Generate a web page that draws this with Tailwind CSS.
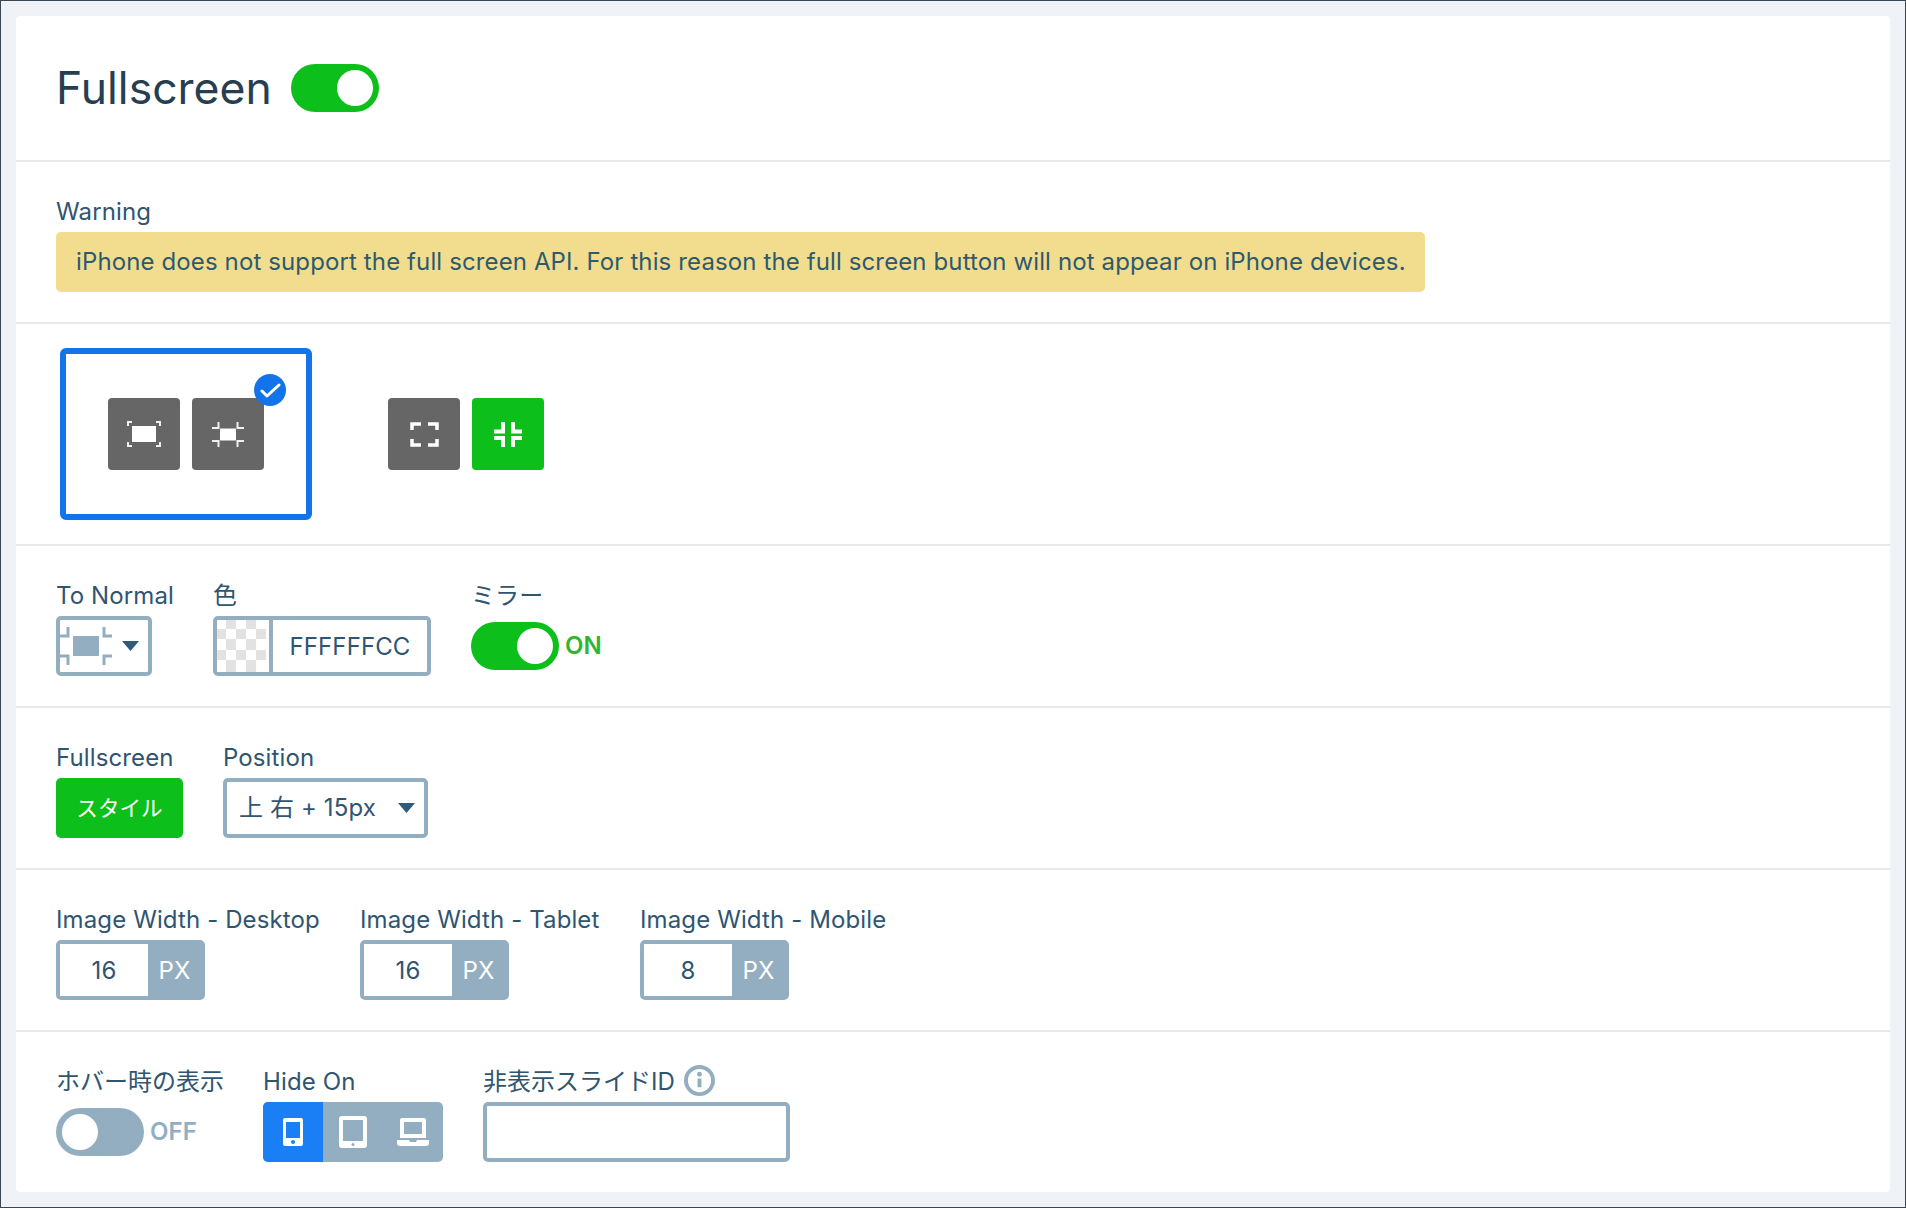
<!DOCTYPE html>
<html lang="ja">
<head>
    <meta charset="UTF-8">
    <meta name="viewport" content="width=device-width, initial-scale=1.0">
    <title>Fullscreen</title>
    <script src="https://cdn.jsdelivr.net/npm/@tailwindcss/browser@4"></script>
</head>
<body class="h-screen overflow-hidden bg-[#eff3f7] border border-[#3b4650] p-[15px] font-['Inter','Noto_Sans_CJK_JP',sans-serif] text-[24px] tracking-[0.12px] text-[#2f5571]">
    <div class="bg-white rounded-[4px] h-[1176px] flex flex-col">

        <!-- heading -->
        <div class="h-[146px] shrink-0 border-b-2 border-[#e6e8ea] px-10 flex items-center gap-[19px]">
            <h1 class="text-[44.500px] leading-none tracking-normal text-[#263e50]">Fullscreen</h1>
            <div class="w-[88px] h-[48px] rounded-full bg-[#0cbf1b] flex items-center justify-end pr-[6px]">
                <span class="w-[36px] h-[36px] rounded-full bg-white"></span>
            </div>
        </div>

        <!-- warning -->
        <div class="h-[162px] shrink-0 border-b-2 border-[#e6e8ea] px-10 pt-[31px]">
            <div class="h-[39px] leading-[38px]">Warning</div>
            <div class="w-[1369px] h-[60px] rounded-[5px] bg-[#f2dd8f] px-5 leading-[60px] whitespace-nowrap text-[#2d5a6e]">iPhone does not support the full screen API. For this reason the full screen button will not appear on iPhone devices.</div>
        </div>

        <!-- icon style picker -->
        <div class="h-[222px] shrink-0 border-b-2 border-[#e6e8ea] pl-[44px] pt-[24px] flex items-start gap-[76px]">
            <div class="relative w-[252px] h-[172px] border-[6px] border-[#1273eb] rounded-[6px] pl-[42px] pt-[44px] flex gap-3">
                <div class="w-[72px] h-[72px] rounded-[4px] bg-[#666666] flex items-center justify-center">
                    <svg width="34" height="26" viewBox="0 0 34 26" fill="none" stroke="#f0f0f0" stroke-width="2"><path d="M1 5V1h4M29 1h4v4M33 21v4h-4M5 25H1v-4"/><rect x="5" y="5" width="24" height="16" fill="#fff" stroke="none"/></svg>
                </div>
                <div class="w-[72px] h-[72px] rounded-[4px] bg-[#666666] flex items-center justify-center">
                    <svg width="32" height="25" viewBox="0 0 32 25" fill="none" stroke="#f0f0f0" stroke-width="2"><path d="M6.500 0v6H0M25.500 0v6H32M25.500 25v-6H32M6.500 25v-6H0"/><rect x="8" y="6.500" width="16" height="12" fill="#fff" stroke="none"/></svg>
                </div>
                <div class="absolute left-[188px] top-[20px] w-[32px] h-[32px] rounded-full bg-[#1273eb] flex items-center justify-center">
                    <svg width="21" height="15" viewBox="0 0 21 15" fill="none" stroke="#fff" stroke-width="3" stroke-linecap="round" stroke-linejoin="round"><path d="M2 8l5 5L19 2"/></svg>
                </div>
            </div>
            <div class="pt-[50px] flex gap-3">
                <div class="w-[72px] h-[72px] rounded-[4px] bg-[#666666] flex items-center justify-center">
                    <svg width="29" height="25" viewBox="0 0 29 25" fill="none" stroke="#fff" stroke-width="3.500"><path d="M2 8V2h9M18 2h9v6M27 17v6h-9M11 23H2v-6"/></svg>
                </div>
                <div class="w-[72px] h-[72px] rounded-[4px] bg-[#0cbf1b] flex items-center justify-center">
                    <svg width="28" height="25" viewBox="0 0 28 25" fill="none" stroke="#fff" stroke-width="4"><path d="M9 0v9.500H0M19 0v9.500h9M19 25v-9h9M9 25v-9H0"/></svg>
                </div>
            </div>
        </div>

        <!-- to normal, colour, mirror -->
        <div class="h-[162px] shrink-0 border-b-2 border-[#e6e8ea] px-10 pt-[31px] flex gap-10">
            <div class="w-[117px]">
                <div class="h-[39px] leading-[38px] whitespace-nowrap">To Normal</div>
                <div class="w-[96px] h-[60px] border-[4px] border-[#93aec0] rounded-[5px] flex items-center overflow-hidden">
                    <svg class="shrink-0" width="52" height="52" viewBox="0 0 52 52" fill="none" stroke="#93aec0" stroke-width="3"><path d="M8 7v9H0M44 7v9h8M44 45v-9h8M8 45v-9H0"/><rect x="13" y="16" width="26" height="20" fill="#93aec0" stroke="none"/></svg>
                    <svg class="ml-[10px]" width="17" height="10" viewBox="0 0 17 10" fill="#2f5a7a"><path d="M0 0h17L8.500 10z"/></svg>
                </div>
            </div>
            <div>
                <div class="h-[39px] leading-[38px]">色</div>
                <div class="w-[218px] h-[60px] border-[4px] border-[#93aec0] rounded-[5px] flex overflow-hidden">
                    <svg class="shrink-0 border-r-[4px] border-[#93aec0]" width="56" height="52" viewBox="0 0 52 52">
                        <rect width="52" height="52" fill="#fff"/>
                        <g fill="#e2e2e2"><rect x="9" y="0" width="10" height="9"/><rect x="29" y="0" width="10" height="9"/><rect x="0" y="9" width="9" height="10"/><rect x="19" y="9" width="10" height="10"/><rect x="39" y="9" width="10" height="10"/><rect x="9" y="19" width="10" height="11"/><rect x="29" y="19" width="10" height="11"/><rect x="0" y="30" width="9" height="10"/><rect x="19" y="30" width="10" height="10"/><rect x="39" y="30" width="10" height="10"/><rect x="9" y="40" width="10" height="12"/><rect x="29" y="40" width="10" height="12"/></g>
                    </svg>
                    <div class="flex-1 text-center leading-[54px]">FFFFFFCC</div>
                </div>
            </div>
            <div>
                <div class="h-[39px] leading-[38px]">ミラー</div>
                <div class="h-[60px] flex items-center gap-[6px]">
                    <div class="w-[88px] h-[48px] rounded-full bg-[#0cbf1b] flex items-center justify-end pr-[6px]">
                        <span class="w-[36px] h-[36px] rounded-full bg-white"></span>
                    </div>
                    <span class="font-semibold text-[#2fb62f]">ON</span>
                </div>
            </div>
        </div>

        <!-- fullscreen style, position -->
        <div class="h-[162px] shrink-0 border-b-2 border-[#e6e8ea] px-10 pt-[31px] flex gap-10">
            <div>
                <div class="w-[127px] h-[39px] leading-[38px]">Fullscreen</div>
                <div class="w-[127px] h-[60px] rounded-[5px] bg-[#0cbf1b] text-white text-[21.600px] tracking-normal flex items-center justify-center">スタイル</div>
            </div>
            <div>
                <div class="h-[39px] leading-[38px]">Position</div>
                <div class="w-[205px] h-[60px] border-[4px] border-[#93aec0] rounded-[5px] pl-[12px] pr-[9px] flex items-center justify-between">
                    <span>上 右 + 15px</span>
                    <svg width="17" height="10" viewBox="0 0 17 10" fill="#2f5a7a"><path d="M0 0h17L8.500 10z"/></svg>
                </div>
            </div>
        </div>

        <!-- image widths -->
        <div class="h-[162px] shrink-0 border-b-2 border-[#e6e8ea] px-10 pt-[31px] flex gap-10">
            <div class="w-[264px]">
                <div class="h-[39px] leading-[38px] whitespace-nowrap">Image Width - Desktop</div>
                <div class="w-[149px] h-[60px] border-[4px] border-[#93aec0] rounded-[5px] flex bg-[#93aec0]">
                    <div class="w-[88px] bg-white text-center leading-[54px]">16</div>
                    <div class="flex-1 text-center leading-[54px] text-white">PX</div>
                </div>
            </div>
            <div class="w-[240px]">
                <div class="h-[39px] leading-[38px] whitespace-nowrap">Image Width - Tablet</div>
                <div class="w-[149px] h-[60px] border-[4px] border-[#93aec0] rounded-[5px] flex bg-[#93aec0]">
                    <div class="w-[88px] bg-white text-center leading-[54px]">16</div>
                    <div class="flex-1 text-center leading-[54px] text-white">PX</div>
                </div>
            </div>
            <div>
                <div class="h-[39px] leading-[38px] whitespace-nowrap">Image Width - Mobile</div>
                <div class="w-[149px] h-[60px] border-[4px] border-[#93aec0] rounded-[5px] flex bg-[#93aec0]">
                    <div class="w-[88px] bg-white text-center leading-[54px]">8</div>
                    <div class="flex-1 text-center leading-[54px] text-white">PX</div>
                </div>
            </div>
        </div>

        <!-- hover, hide on, hidden slides -->
        <div class="flex-1 px-10 pt-[31px] flex gap-10">
            <div class="w-[167px]">
                <div class="h-[39px] leading-[38px] tracking-normal whitespace-nowrap">ホバー時の表示</div>
                <div class="h-[60px] flex items-center gap-[6px]">
                    <div class="w-[88px] h-[48px] rounded-full bg-[#93aec0] flex items-center pl-[6px]">
                        <span class="w-[36px] h-[36px] rounded-full bg-white"></span>
                    </div>
                    <span class="font-semibold text-[#93aec0]">OFF</span>
                </div>
            </div>
            <div>
                <div class="h-[39px] leading-[38px]">Hide On</div>
                <div class="w-[180px] h-[60px] rounded-[5px] bg-[#93aec0] flex overflow-hidden">
                    <div class="w-[60px] bg-[#1a7ff5] flex items-center justify-center">
                        <svg width="20" height="28" viewBox="0 0 20 28"><path fill="#fff" fill-rule="evenodd" d="M2 0h16a2 2 0 0 1 2 2v24a2 2 0 0 1-2 2H2a2 2 0 0 1-2-2V2a2 2 0 0 1 2-2zM3 4v16h14V4z"/><circle cx="10" cy="24" r="2" fill="#1a7ff5"/></svg>
                    </div>
                    <div class="w-[60px] flex items-center justify-center">
                        <svg width="28" height="32" viewBox="0 0 28 32"><path fill="#fff" fill-rule="evenodd" d="M3 0h22a3 3 0 0 1 3 3v26a3 3 0 0 1-3 3H3a3 3 0 0 1-3-3V3a3 3 0 0 1 3-3zM4 4v21h20V4z"/><circle cx="14" cy="28.500" r="1.500" fill="#93aec0"/></svg>
                    </div>
                    <div class="w-[60px] flex items-center justify-center">
                        <svg width="32" height="28" viewBox="0 0 32 28"><path fill="#fff" fill-rule="evenodd" d="M5 0h22a2 2 0 0 1 2 2v18H3V2a2 2 0 0 1 2-2zM7 4v12h18V4z"/><path fill="#fff" d="M0 22h12l1 2h6l1-2h12v3a3 3 0 0 1-3 3H3a3 3 0 0 1-3-3z"/></svg>
                    </div>
                </div>
            </div>
            <div>
                <div class="h-[39px] flex items-start gap-[9px]">
                    <span class="leading-[38px] tracking-normal">非表示スライドID</span>
                    <svg class="mt-[2px]" width="31" height="31" viewBox="0 0 32 32" fill="none" stroke="#93aec0"><circle cx="16" cy="16" r="14" stroke-width="4"/><path d="M16 14v9" stroke-width="4"/><circle cx="16" cy="9.500" r="2.500" fill="#93aec0" stroke="none"/></svg>
                </div>
                <div class="w-[307px] h-[60px] border-[4px] border-[#93aec0] rounded-[5px]"></div>
            </div>
        </div>
    </div>
</body>
</html>
